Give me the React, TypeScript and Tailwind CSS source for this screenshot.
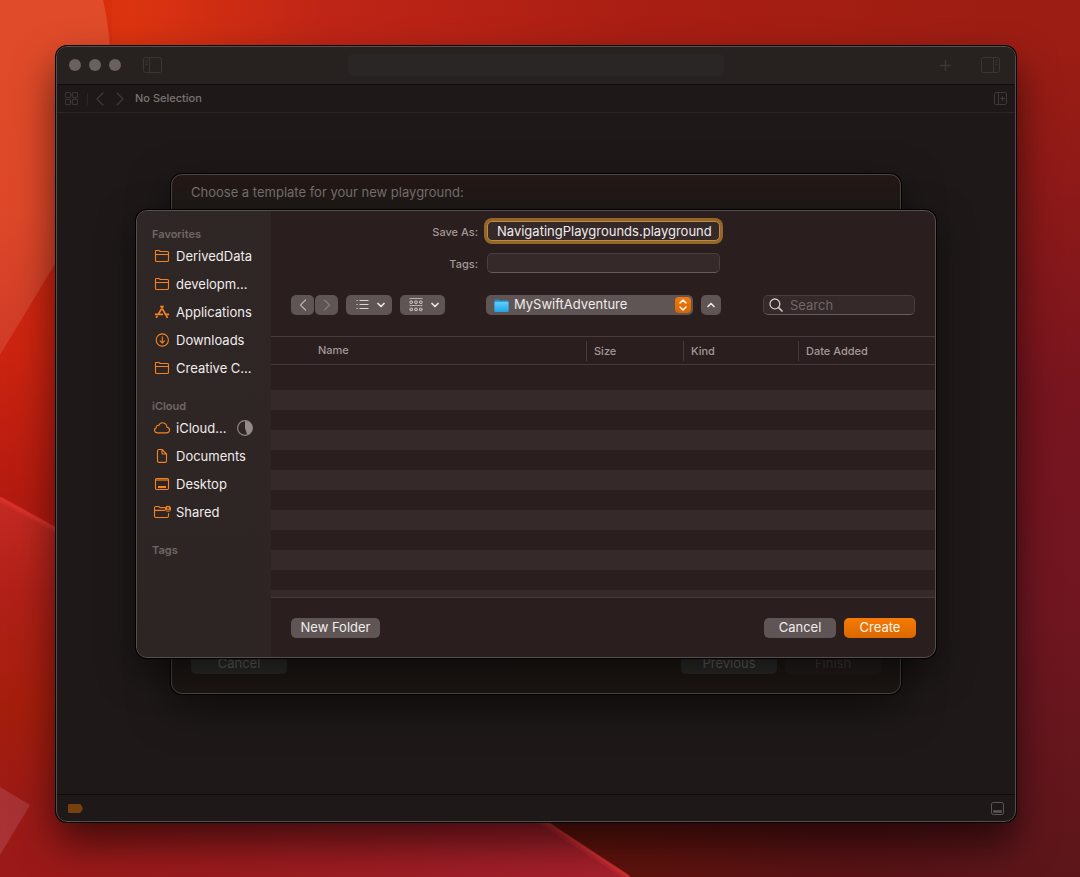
import type { ReactNode } from "react";

function Wallpaper() {
  return (
    <svg
      className="absolute inset-0 h-full w-full"
      viewBox="0 0 1080 877"
      preserveAspectRatio="none"
      aria-hidden="true"
    >
      <defs>
        <linearGradient id="base" x1="0" y1="0" x2="1" y2="0">
          <stop offset="0" stopColor="#d22a10" />
          <stop offset="0.12" stopColor="#dc3410" />
          <stop offset="0.3" stopColor="#bf2516" />
          <stop offset="0.6" stopColor="#a91e13" />
          <stop offset="1" stopColor="#9b1d13" />
        </linearGradient>
        <linearGradient id="right" x1="0" y1="0" x2="0" y2="1">
          <stop offset="0.05" stopColor="#7c1420" stopOpacity="0" />
          <stop offset="0.45" stopColor="#78151f" />
          <stop offset="0.7" stopColor="#701621" />
          <stop offset="1" stopColor="#5c161a" />
        </linearGradient>
        <linearGradient id="left" x1="0" y1="0" x2="0" y2="1">
          <stop offset="0" stopColor="#d8300f" />
          <stop offset="0.4" stopColor="#cc2410" />
          <stop offset="0.58" stopColor="#b21a10" />
        </linearGradient>
        <linearGradient id="arc" x1="0" y1="0" x2="0" y2="1">
          <stop offset="0" stopColor="#e04c29" />
          <stop offset="0.6" stopColor="#de4829" />
          <stop offset="1" stopColor="#cf3b28" />
        </linearGradient>
        <linearGradient id="lower" gradientUnits="userSpaceOnUse" x1="0" y1="500" x2="0" y2="877">
          <stop offset="0" stopColor="#c42a22" />
          <stop offset="0.25" stopColor="#b02018" />
          <stop offset="0.55" stopColor="#a51e0c" />
          <stop offset="0.8" stopColor="#9c1a16" />
          <stop offset="1" stopColor="#9b1919" />
        </linearGradient>
        <linearGradient id="lowerRight" gradientUnits="userSpaceOnUse" x1="60" y1="0" x2="640" y2="0">
          <stop offset="0" stopColor="#96202a" stopOpacity="0" />
          <stop offset="1" stopColor="#a8202e" />
        </linearGradient>
        <linearGradient id="shade" gradientUnits="userSpaceOnUse" x1="550" y1="0" x2="1080" y2="0">
          <stop offset="0" stopColor="#60130a" />
          <stop offset="0.6" stopColor="#581216" />
          <stop offset="1" stopColor="#5e171c" />
        </linearGradient>
      </defs>
      <rect width="1080" height="877" fill="url(#base)" />
      <rect width="112" height="877" fill="url(#left)" />
      <rect x="700" width="380" height="877" fill="url(#right)" />
      <rect x="500" y="800" width="520" height="77" fill="url(#shade)" />
      <path d="M0 0H103C124 92 100 190 56 262L0 355Z" fill="url(#arc)" />
      <path d="M0 497L56 528Q320 670 548 822L631 877H0Z" fill="url(#lower)" />
      <path d="M0 497L56 528Q320 670 548 822L631 877H0Z" fill="url(#lowerRight)" />
      <path d="M0 499L56 530Q320 672 546 824L627 877" fill="none" stroke="#ee3a35" strokeOpacity="0.25" strokeWidth="6" />
      <path d="M0 498L56 529Q320 671 547 823L629 877" fill="none" stroke="#ee3a35" strokeOpacity="0.4" strokeWidth="3" />
      <path d="M0 787L30 805L0 855Z" fill="#c0606a" fillOpacity="0.35" />
    </svg>
  );
}

function PanelIcon({ side }: { side: "left" | "right" }) {
  return (
    <svg
      width="19"
      height="16"
      viewBox="0 0 19 16"
      fill="none"
      stroke="#3b3533"
      className={side === "right" ? "-scale-x-100" : ""}
    >
      <rect x="0.5" y="0.5" width="18" height="15" rx="2" />
      <path d="M6.5 0.5V15.5M2.5 3.5H4.5M2.5 5.5H4.5M2.5 7.5H4.5" />
    </svg>
  );
}

function Chevron({ dir, color }: { dir: "left" | "right"; color: string }) {
  return (
    <svg width="8" height="14" viewBox="0 0 8 14" fill="none" stroke={color} strokeWidth="1.2" strokeLinecap="round" strokeLinejoin="round">
      <path d={dir === "left" ? "M7 1L1 7L7 13" : "M1 1L7 7L1 13"} />
    </svg>
  );
}

function Caret({ up = false }: { up?: boolean }) {
  return (
    <svg width="8" height="6" viewBox="0 0 8 6" fill="none" stroke="#e9e5e4" strokeWidth="1.7" strokeLinecap="round" strokeLinejoin="round">
      <path d={up ? "M1 4.5L4 1.5L7 4.5" : "M1 1.5L4 4.5L7 1.5"} />
    </svg>
  );
}

function Glyph({ children }: { children: ReactNode }) {
  return (
    <svg
      width="18"
      height="16"
      viewBox="0 0 18 16"
      fill="none"
      stroke="#f5821f"
      strokeWidth="1.1"
      strokeLinecap="round"
      strokeLinejoin="round"
      className="mb-0.5 shrink-0"
      aria-hidden="true"
    >
      {children}
    </svg>
  );
}

const folder = (
  <Glyph>
    <path d="M2.5 12.2V3.2Q2.5 2.5 3.2 2.5H6L7.3 3.5H14.5Q15.5 3.5 15.5 4.5V12.2Q15.5 13.5 14.2 13.5H3.8Q2.5 13.5 2.5 12.2ZM2.5 6.5H15.5" />
  </Glyph>
);
const apps = (
  <Glyph>
    <path d="M8 2.3L12.9 11M10 2.3L5.7 9.6M2.6 10.4H9.4M13 10.4H15.4M13.6 12.2L14.2 13.2M4 12.4L3.5 13.2" strokeWidth="1.7" />
  </Glyph>
);
const download = (
  <Glyph>
    <circle cx="9.3" cy="8" r="6.1" />
    <path d="M9.3 4.8V11M7.1 8.9L9.3 11.1L11.5 8.9" />
  </Glyph>
);
const cloud = (
  <Glyph>
    <path d="M4.4 12.9H13.4C17.6 12.7 17.5 7.7 13.9 7.3C13.9 2.4 7.5 1.2 6 5.4C4.1 4.9 3 6.2 3.3 7.7C0.6 8.7 1 12.7 4.4 12.9Z" />
  </Glyph>
);
const doc = (
  <Glyph>
    <path d="M4.5 3Q4.5 1.5 6 1.5H9L13.5 6V12.9Q13.5 14.4 12 14.4H6Q4.5 14.4 4.5 12.9ZM9 1.6V5Q9 6 10 6H13.4" />
  </Glyph>
);
const desktop = (
  <Glyph>
    <rect x="2.5" y="2.5" width="13" height="11" rx="1.2" />
    <path d="M3 4H15" strokeOpacity="0.6" strokeWidth="2" />
    <path d="M5 11H13" strokeWidth="2" strokeLinecap="butt" />
  </Glyph>
);
const shared = (
  <Glyph>
    <path d="M11.5 3.6H7L5.7 2.5H3Q1.5 2.5 1.5 4V12Q1.5 13.5 3 13.5H14Q15.5 13.5 15.5 12V9.5M1.5 6.4H11.5" />
    <circle cx="15" cy="4.8" r="3" fill="#f5821f" stroke="none" />
    <circle cx="15" cy="3.9" r="0.9" fill="#2e2625" stroke="none" />
    <path d="M13.6 6.4Q15 5.2 16.4 6.4" stroke="#2e2625" strokeWidth="0.9" />
  </Glyph>
);

function SideRow({ icon, label, children }: { icon: ReactNode; label: string; children?: ReactNode }) {
  return (
    <li>
      <a href="#" className="flex h-7 items-center pr-[18px] pl-4 text-[13px] text-[#f0ecec]">
        {icon}
        <span className="ml-[5px] flex-1 whitespace-nowrap">{label}</span>
        {children}
      </a>
    </li>
  );
}

function SideHeading({ children }: { children: ReactNode }) {
  return <h2 className="h-[18px] pl-[15px] text-[11px] leading-[18px] font-semibold text-[#6f6765]">{children}</h2>;
}

const grayButton =
  "flex h-5 items-center justify-center rounded-[5px] bg-[#5e5554] text-[13px] text-[#f0ecec]";

function SaveDialog() {
  return (
    <section
      role="dialog"
      aria-label="Save"
      className="z-10 col-start-1 row-start-1 mt-[97px] flex w-[800px] max-w-full self-start overflow-hidden rounded-[11px] border border-[#574f4d] bg-[#2a1e1e] shadow-[0_0_0_1px_#000,0_14px_36px_rgba(0,0,0,0.5)]"
    >
      <nav className="w-[134px] shrink-0 bg-linear-to-b from-[#2f2726] to-[#2d2524] pt-[14px]">
        <SideHeading>Favorites</SideHeading>
        <ul className="mb-[14px]">
          <SideRow icon={folder} label="DerivedData" />
          <SideRow icon={folder} label="developm..." />
          <SideRow icon={apps} label="Applications" />
          <SideRow icon={download} label="Downloads" />
          <SideRow icon={folder} label="Creative C..." />
        </ul>
        <SideHeading>iCloud</SideHeading>
        <ul className="mb-[14px]">
          <SideRow icon={cloud} label="iCloud...">
            <svg width="16" height="16" viewBox="0 0 16 16" className="mb-0.5 shrink-0">
              <circle cx="8" cy="8" r="7.4" fill="none" stroke="#958b8a" strokeWidth="1.1" />
              <path d="M8 8V1A7 7 0 0 1 10.2 14.7Z" fill="#958b8a" />
            </svg>
          </SideRow>
          <SideRow icon={doc} label="Documents" />
          <SideRow icon={desktop} label="Desktop" />
          <SideRow icon={shared} label="Shared" />
        </ul>
        <SideHeading>Tags</SideHeading>
      </nav>

      <div className="min-w-0 flex-1">
        <form className="flex flex-col gap-3 pt-[10px]">
          <div className="flex h-5 items-center gap-2">
            <label htmlFor="save-as" className="w-52 pt-0.5 pr-[1px] text-right text-[11px] font-medium text-[#a39a99]">
              Save As:
            </label>
            <input
              id="save-as"
              defaultValue="NavigatingPlaygrounds.playground"
              className="h-5 w-[233px] rounded-[5px] border border-[#c08a3c] bg-[#352929] pr-1 pl-[9px] text-[13px] text-[#f0ecec] shadow-[0_0_0_3px_#94662a] outline-none"
            />
          </div>
          <div className="flex h-5 items-center gap-2">
            <label htmlFor="tags" className="w-52 pt-0.5 pr-[1px] text-right text-[11px] font-medium text-[#a39a99]">
              Tags:
            </label>
            <input
              id="tags"
              className="h-5 w-[233px] rounded-[5px] border border-[#4a3f3e] border-b-[#665c5b] bg-[#352929] px-2 text-[13px] text-[#e6e1e0] outline-none"
            />
          </div>
        </form>

        <div className="mt-[22px] flex h-5 items-center px-5">
          <div className="flex gap-px">
            <button aria-label="Back" className={`${grayButton} w-[23px]`}>
              <svg width="8" height="12" viewBox="0 0 8 12" fill="none" stroke="#b8b0af" strokeWidth="1.2" strokeLinecap="round" strokeLinejoin="round">
                <path d="M6.5 1L1.5 6L6.5 11" />
              </svg>
            </button>
            <button aria-label="Forward" className={`${grayButton} w-[23px]`}>
              <svg width="8" height="12" viewBox="0 0 8 12" fill="none" stroke="#857b7a" strokeWidth="1.2" strokeLinecap="round" strokeLinejoin="round">
                <path d="M1.5 1L6.5 6L1.5 11" />
              </svg>
            </button>
          </div>
          <button aria-label="View as list" className={`${grayButton} ml-2 w-[46px] gap-2 pl-[3px]`}>
            <svg width="13" height="10" viewBox="0 0 13 10" fill="none" stroke="#d9d4d3">
              <path d="M3.5 0.5H12.5M3.5 4.5H12.5M3.5 8.5H12.5" />
              <path d="M0.5 0.5H1.7M0.5 4.5H1.7M0.5 8.5H1.7" strokeWidth="1.2" />
            </svg>
            <Caret />
          </button>
          <button aria-label="Group items" className={`${grayButton} ml-2 w-[45px] gap-2 pl-[3px]`}>
            <svg width="14" height="14" viewBox="0 0 14 14" fill="none" stroke="#d9d4d3">
              <path d="M0.5 0.5H13.5M0.5 7.5H13.5" strokeOpacity="0.7" />
              <rect x="1" y="3" width="2.4" height="2.4" rx="0.6" />
              <rect x="5.8" y="3" width="2.4" height="2.4" rx="0.6" />
              <rect x="10.6" y="3" width="2.4" height="2.4" rx="0.6" />
              <rect x="1" y="10.2" width="2.4" height="2.4" rx="0.6" />
              <rect x="5.8" y="10.2" width="2.4" height="2.4" rx="0.6" />
              <rect x="10.6" y="10.2" width="2.4" height="2.4" rx="0.6" />
            </svg>
            <Caret />
          </button>

          <div className="relative ml-[41px] w-[207px]">
            <select
              aria-label="Location"
              className="block h-5 w-full appearance-none rounded-[5px] bg-[#5e5554] pl-7 text-[13px] text-[#f0ecec] outline-none"
            >
              <option>MySwiftAdventure</option>
            </select>
            <svg width="15" height="14" viewBox="0 0 15 14" className="pointer-events-none absolute top-1 left-2">
              <defs>
                <linearGradient id="folderBlue" x1="0" y1="0" x2="0" y2="1">
                  <stop offset="0" stopColor="#62cdfb" />
                  <stop offset="1" stopColor="#1fa5e9" />
                </linearGradient>
              </defs>
              <path d="M0.5 1.2Q0.5 0.4 1.3 0.4H5L6.3 1.4H13.7Q14.5 1.4 14.5 2.2V12H0.5Z" fill="#1b8fd0" />
              <path d="M0.5 2.8H14.5V12.2Q14.5 13 13.7 13H1.3Q0.5 13 0.5 12.2Z" fill="url(#folderBlue)" />
            </svg>
            <span className="pointer-events-none absolute top-[2px] right-[2px] flex h-4 w-4 items-center justify-center rounded-[4px] bg-linear-to-b from-[#f57a0a] to-[#d96500]">
              <svg width="8" height="12" viewBox="0 0 8 12" fill="none" stroke="#fff" strokeWidth="1.5" strokeLinecap="round" strokeLinejoin="round">
                <path d="M1 4L4 1L7 4M1 8L4 11L7 8" />
              </svg>
            </span>
          </div>
          <button aria-label="Collapse" className={`${grayButton} ml-2 w-5`}>
            <Caret up />
          </button>

          <div className="relative ml-auto w-[152px]">
            <input
              type="search"
              aria-label="Search"
              placeholder="Search"
              className="block h-5 w-full rounded-[5px] border border-[#4a3f3e] border-b-[#665c5b] bg-[#352929] pl-[26px] text-[13px] text-[#e6e1e0] outline-none placeholder:text-[#716766]"
            />
            <svg width="14" height="14" viewBox="0 0 14 14" fill="none" stroke="#cdc7c6" strokeLinecap="round" className="pointer-events-none absolute top-[3px] left-[6px]">
              <circle cx="5.9" cy="5.9" r="4.9" strokeWidth="1.3" />
              <path d="M9.6 9.6L13 13" strokeWidth="1.7" />
            </svg>
          </div>
        </div>

        <div className="mt-[21px] h-[262px] overflow-hidden border-y border-[#463b3a]">
          <table className="w-full table-fixed border-separate border-spacing-0 text-left text-[11px] font-medium text-[#a39a99]">
            <colgroup>
              <col />
              <col className="w-[97px]" />
              <col className="w-[115px]" />
              <col className="w-[137px]" />
            </colgroup>
            <thead>
              <tr className="h-7">
                <th className="border-b border-[#463b3a] py-0 pr-0 pl-[47px] font-medium">Name</th>
                <th className="border-b border-[#463b3a] p-0 font-medium">
                  <span className="block border-l border-[#463b3a] pl-[7px] leading-5">Size</span>
                </th>
                <th className="border-b border-[#463b3a] p-0 font-medium">
                  <span className="block border-l border-[#463b3a] pl-[7px] leading-5">Kind</span>
                </th>
                <th className="border-b border-[#463b3a] p-0 font-medium">
                  <span className="block border-l border-[#463b3a] pl-[7px] leading-5">Date Added</span>
                </th>
              </tr>
            </thead>
            <tbody>
              <tr className="h-[25px]">
                <td colSpan={4} className="p-0" />
              </tr>
              {Array.from({ length: 11 }, (_, i) => (
                <tr key={i} className="h-5 odd:bg-[#2a1e1e] even:bg-[#352929]">
                  <td colSpan={4} className="p-0" />
                </tr>
              ))}
            </tbody>
          </table>
        </div>

        <div className="flex gap-2 pt-5 pr-[19px] pb-[19px] pl-5">
          <button className={`${grayButton} w-[89px]`}>New Folder</button>
          <button className={`${grayButton} ml-auto w-[72px]`}>Cancel</button>
          <button className="flex h-5 w-[72px] items-center justify-center rounded-[5px] bg-linear-to-b from-[#f67a05] to-[#dc6800] text-[13px] text-[#fff6ec]">
            Create
          </button>
        </div>
      </div>
    </section>
  );
}

function TemplateSheet() {
  return (
    <section className="col-start-1 row-start-1 mt-[61px] flex min-h-[520px] w-[730px] max-w-full flex-col justify-between rounded-[11px] border border-[#4b4543] bg-linear-to-b from-[#241716] via-[#1f1916] via-5% to-[#1c1613] pt-[7px] pr-[19px] pb-[19px] pl-[19px] shadow-[0_0_0_1px_#000,0_14px_40px_rgba(0,0,0,0.5)]">
      <p className="text-[13px] leading-5 text-[#756e6c]">Choose a template for your new playground:</p>
      <div className="flex gap-2 text-[13px]">
        <button className="flex h-5 w-24 items-center justify-center rounded-[5px] bg-[#292827] text-[#5e5a58]">Cancel</button>
        <button className="ml-auto flex h-5 w-24 items-center justify-center rounded-[5px] bg-[#292827] text-[#5e5a58]">Previous</button>
        <button disabled className="flex h-5 w-24 items-center justify-center rounded-[5px] bg-[#201b1a] text-[#3b3635]">
          Finish
        </button>
      </div>
    </section>
  );
}

export default function App() {
  return (
    <div className="relative flex min-h-screen overflow-hidden bg-[#8a1a18] pt-[46px] pr-16 pb-[55px] pl-14 font-['Inter','Liberation_Sans',sans-serif]">
      <Wallpaper />
      <main className="relative flex min-w-0 flex-1 flex-col rounded-[11px] border border-[#544e4c] bg-[#1e1918] shadow-[0_0_0_1px_#000,0_20px_40px_rgba(0,0,0,0.6)]">
        <header className="grid h-[38px] grid-cols-[1fr_376px_1fr] items-center rounded-t-[10px] border-b border-[#0c0a0a] bg-[#27221f] pb-px">
          <div className="flex items-center pl-3">
            <div className="flex gap-2">
              <button aria-label="Close" className="h-3 w-3 rounded-full bg-[#6a605f]" />
              <button aria-label="Minimize" className="h-3 w-3 rounded-full bg-[#6a605f]" />
              <button aria-label="Zoom" className="h-3 w-3 rounded-full bg-[#6a605f]" />
            </div>
            <button aria-label="Toggle navigator" className="ml-[22px]">
              <PanelIcon side="left" />
            </button>
          </div>
          <div className="h-[22px] rounded-[5px] bg-[#2a2625]" />
          <div className="flex items-center justify-end gap-[30px] pr-[15px]">
            <button aria-label="Add">
              <svg width="11" height="11" viewBox="0 0 11 11" stroke="#3b3533" strokeWidth="1.6" strokeLinecap="round">
                <path d="M5.5 0.5V10.5M0.5 5.5H10.5" />
              </svg>
            </button>
            <button aria-label="Toggle inspector">
              <PanelIcon side="right" />
            </button>
          </div>
        </header>

        <div className="flex h-7 items-center border-b border-[#2a2423] pr-2 pl-2">
          <button aria-label="Related items">
            <svg width="13" height="13" viewBox="0 0 13 13" fill="none" stroke="#3b3533">
              <path d="M0.5 0.5H5.5V5.5H0.5ZM7.5 0.5H12.5V5.5H7.5ZM0.5 7.5H5.5V12.5H0.5ZM7.5 7.5H12.5V12.5H7.5ZM5.5 3H7.5M10 5.5V7.5M4 10H7.5" />
            </svg>
          </button>
          <span className="ml-[9px] h-3 w-px bg-[#2c2726]" />
          <button aria-label="Go back" className="ml-2">
            <Chevron dir="left" color="#3f3937" />
          </button>
          <button aria-label="Go forward" className="ml-3">
            <Chevron dir="right" color="#3f3937" />
          </button>
          <span className="ml-[11px] text-[11px] font-medium text-[#7a7371]">No Selection</span>
          <button aria-label="Add editor" className="ml-auto">
            <svg width="13" height="13" viewBox="0 0 13 13" fill="none" stroke="#3f3937">
              <rect x="0.5" y="0.5" width="12" height="12" rx="1.5" />
              <path d="M4.5 0.5V12.5M6.2 6.5H11M8.5 4V9" />
            </svg>
          </button>
        </div>

        <div className="grid flex-1 content-start justify-items-center pb-25">
          <TemplateSheet />
          <SaveDialog />
        </div>

        <footer className="flex h-[27px] items-center justify-between border-t border-[#0f0c0c] pr-[11px] pl-[11px]">
          <button aria-label="Breakpoints">
            <svg width="15" height="9" viewBox="0 0 15 9">
              <path d="M1.2 0H11.4Q12.2 0 12.8 0.7L14.6 3.7Q15 4.5 14.6 5.3L12.8 8.3Q12.2 9 11.4 9H1.2Q0 9 0 7.8V1.2Q0 0 1.2 0Z" fill="#77400f" />
            </svg>
          </button>
          <button aria-label="Toggle debug area">
            <svg width="13" height="13" viewBox="0 0 13 13" fill="none" stroke="#5d5654">
              <rect x="0.5" y="0.5" width="12" height="12" rx="1.8" />
              <rect x="2.2" y="8.2" width="8.6" height="2.6" fill="#5d5654" stroke="none" />
            </svg>
          </button>
        </footer>
      </main>
    </div>
  );
}
